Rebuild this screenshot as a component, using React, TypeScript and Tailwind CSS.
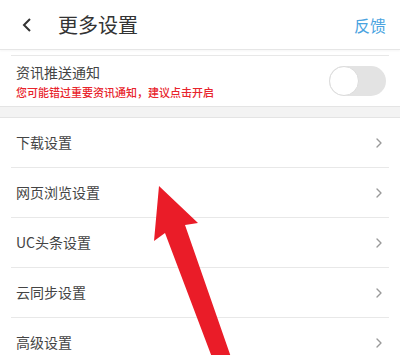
import { ChevronRight } from "lucide-react";

const items = ["下载设置", "网页浏览设置", "UC头条设置", "云同步设置", "高级设置"];

export default function App() {
  return (
    <div
      className="relative w-[400px] h-[355px] overflow-hidden bg-white text-[#333]"
      style={{ fontFamily: '"Noto Sans CJK SC", "Noto Sans", sans-serif' }}
    >
      {/* header */}
      <div className="h-[50px] flex items-center border-b border-[#e6e6e6] shadow-[0_1px_2px_rgba(0,0,0,0.04)]">
        <svg width="12" height="16" viewBox="0 0 12 16" className="ml-[21px]">
          <path d="M9 2 L3 8 L9 14" fill="none" stroke="#333" strokeWidth="2" />
        </svg>
        <span className="ml-[25px] text-[20px] leading-none text-[#333]">更多设置</span>
        <span className="ml-auto mr-[14px] text-[16px] leading-none text-[#4aa3df]">反馈</span>
      </div>

      {/* push notification */}
      <div className="mt-[5px] mx-[11px] border-t border-[#e8e8e8]" />
      <div className="h-[50px] flex items-center px-4">
        <div className="flex flex-col">
          <span className="text-[14px] leading-[18px] text-[#444] mt-[-1px]">资讯推送通知</span>
          <span className="text-[11px] leading-[14px] font-medium text-[#e8242c] mt-[4px]">
            您可能错过重要资讯通知，建议点击开启
          </span>
        </div>
        <div className="ml-auto mr-[-2px] w-[57px] h-[30px] rounded-full bg-[#e3e3e3] flex items-center">
          <div className="w-[30px] h-[30px] rounded-full bg-white border border-[#dcdcdc]" />
        </div>
      </div>

      <div className="h-[12px] bg-[#f3f3f3] border-y border-[#e4e4e4]" />

      {/* list */}
      <div className="flex flex-col">
        {items.map((t, i) => (
          <div key={t} className="mx-[11px]">
            {i > 0 && <div className="border-t border-[#e8e8e8]" />}
            <div className="h-[49px] flex items-center pl-[5px] pr-[2px]">
              <span className="text-[14px] text-[#444]">{t}</span>
              <ChevronRight className="ml-auto text-[#999]" size={16} strokeWidth={2} />
            </div>
          </div>
        ))}
      </div>

      {/* red arrow overlay */}
      <svg className="absolute left-0 top-0" width="400" height="355" viewBox="0 0 400 355">
        <polygon
          points="159,186 198,223 185,225 232,360 213,360 165,233 154,241"
          fill="#ea1c28"
        />
      </svg>
    </div>
  );
}
